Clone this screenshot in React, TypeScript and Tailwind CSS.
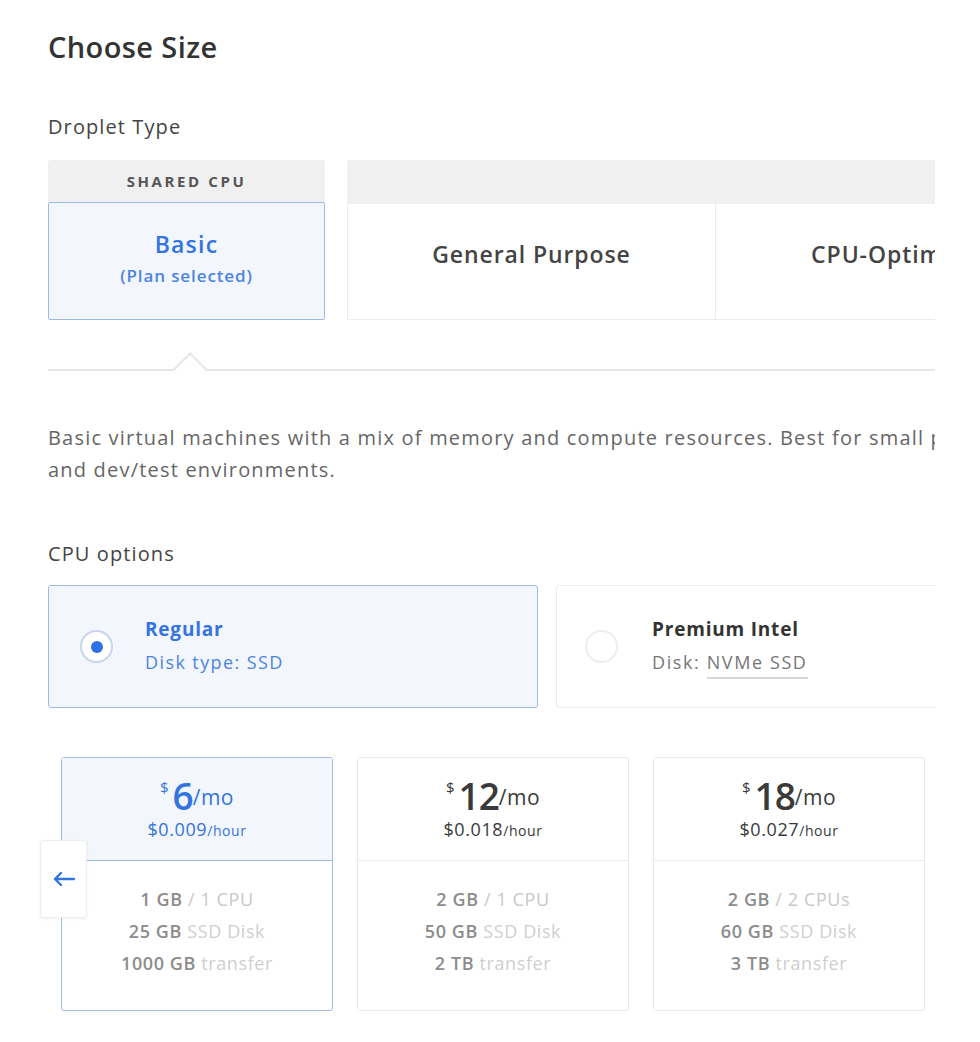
import React from 'react';

const plans = [
  { price: '6', hour: '$0.009', ram: '1 GB', cpu: '/ 1 CPU', disk: '25 GB', transfer: '1000 GB', selected: true },
  { price: '12', hour: '$0.018', ram: '2 GB', cpu: '/ 1 CPU', disk: '50 GB', transfer: '2 TB', selected: false },
  { price: '18', hour: '$0.027', ram: '2 GB', cpu: '/ 2 CPUs', disk: '60 GB', transfer: '3 TB', selected: false },
];

function PlanCard({ plan }: { plan: (typeof plans)[number] }) {
  const sel = plan.selected;
  return (
    <div
      className={`w-[272px] h-[254px] shrink-0 rounded-[3px] border flex flex-col ${
        sel ? 'border-[#9dbbe8]' : 'border-[#e8e8e8]'
      }`}
    >
      <div
        className={`h-[103px] flex flex-col items-center justify-center border-b pb-[4px] ${
          sel ? 'bg-[#f3f7fd] border-[#9dbbe8] text-[#3374e0]' : 'border-[#ececec] text-[#3a3a3a]'
        }`}
      >
        <div className="flex items-start leading-none">
          <span className="text-[15px] mt-[3px] mr-[4px]">$</span>
          <span className="text-[37px] font-semibold tracking-[-1px]">{plan.price}</span>
          <span className="text-[21px] mt-[10px] tracking-[0.5px]">/mo</span>
        </div>
        <div className="mt-[6px] leading-none tracking-[0.6px]">
          <span className="text-[18px]">{plan.hour}</span>
          <span className="text-[14px]">/hour</span>
        </div>
      </div>
      <div className="flex-1 flex flex-col items-center pt-[22px] text-[18px] leading-[32px] tracking-[0.6px] text-[#8c8c8c]">
        <p>
          <span className="font-semibold">{plan.ram}</span> <span className="text-[#c8c8c8]">{plan.cpu}</span>
        </p>
        <p>
          <span className="font-semibold">{plan.disk}</span> <span className="text-[#cfcfcf]">SSD Disk</span>
        </p>
        <p>
          <span className="font-semibold">{plan.transfer}</span> <span className="text-[#cfcfcf]">transfer</span>
        </p>
      </div>
    </div>
  );
}

export default function App() {
  return (
    <div
      className="w-[980px] h-[1042px] bg-white overflow-hidden"
      style={{ fontFamily: '"Open Sans", "Liberation Sans", sans-serif' }}
    >
      <div className="w-[935px] overflow-hidden pl-[48px] pt-[28px]">
        <div className="w-[1100px]">
          <h1 className="text-[29px] leading-[38px] font-semibold tracking-[0.4px] text-[#333]">Choose Size</h1>

          <h2 className="mt-[48px] text-[20px] leading-[26px] tracking-[1.1px] text-[#444]">Droplet Type</h2>

          {/* Droplet type tabs */}
          <div className="mt-[20px] flex gap-[22px]">
            <div className="w-[277px] flex flex-col">
              <div className="h-[42px] bg-[#f0f0f0] rounded-t-[3px] flex items-center justify-center text-[15px] font-bold tracking-[2.6px] text-[#555]">
                SHARED CPU
              </div>
              <div className="h-[118px] bg-[#f3f7fd] border border-[#9dbbe8] rounded-[2px] flex flex-col items-center justify-center pb-[6px]">
                <span className="text-[23px] leading-[28px] font-semibold tracking-[1.2px] text-[#3374e0]">Basic</span>
                <span className="mt-[8px] text-[17px] leading-[20px] font-semibold tracking-[0.9px] text-[#4c84e3]">(Plan selected)</span>
              </div>
            </div>
            <div className="w-[740px] flex flex-col">
              <div className="h-[44px] bg-[#f0f0f0] rounded-t-[3px]" />
              <div className="h-[116px] flex border border-t-0 border-[#ececec]">
                <div className="w-[368px] flex items-center justify-center pb-[14px] border-r border-[#ececec] text-[23px] font-semibold tracking-[0.9px] text-[#444]">
                  General Purpose
                </div>
                <div className="flex-1 flex items-center justify-center pb-[14px] text-[23px] font-semibold tracking-[0.9px] text-[#444]">
                  CPU-Optimized
                </div>
              </div>
            </div>
          </div>

          {/* Divider with notch */}
          <div className="relative mt-[49px] h-[2px] bg-[#e6e6e6]">
            <div className="absolute left-[130px] top-[-12px] w-[24px] h-[24px] rotate-45 bg-white border-l-2 border-t-2 border-[#e6e6e6]" />
          </div>

          <p className="mt-[51px] whitespace-nowrap text-[20px] leading-[32px] tracking-[1.2px] text-[#666]">
            Basic virtual machines with a mix of memory and compute resources. Best for small projects that can handle
            variable levels of CPU performance, like blogs, web apps
            <br />
            and dev/test environments.
          </p>

          <h2 className="mt-[55px] text-[20px] leading-[26px] tracking-[1.1px] text-[#444]">CPU options</h2>

          {/* CPU options */}
          <div className="mt-[18px] flex gap-[18px]">
            <div className="w-[490px] h-[123px] bg-[#f3f7fd] border border-[#9dbbe8] rounded-[3px] flex items-center pl-[31px]">
              <div className="w-[33px] h-[33px] rounded-full border-2 border-[#c7d6ee] bg-white flex items-center justify-center">
                <div className="w-[12px] h-[12px] rounded-full bg-[#2f6fe6]" />
              </div>
              <div className="ml-[32px] flex flex-col mt-[-4px]">
                <span className="text-[19px] leading-[26px] font-bold tracking-[0.8px] text-[#3374e0]">Regular</span>
                <span className="mt-[8px] text-[18px] leading-[24px] tracking-[1.4px] text-[#4c84e3]">Disk type: SSD</span>
              </div>
            </div>
            <div className="w-[490px] h-[123px] bg-white border border-[#ececec] rounded-[3px] flex items-center pl-[28px]">
              <div className="w-[33px] h-[33px] rounded-full border-2 border-[#eeeeee] bg-white" />
              <div className="ml-[34px] flex flex-col mt-[-4px]">
                <span className="text-[19px] leading-[26px] font-bold tracking-[0.8px] text-[#333]">Premium Intel</span>
                <span className="mt-[8px] text-[18px] leading-[24px] tracking-[1.6px] text-[#777]">
                  Disk: <span className="border-b-2 border-[#d8d8d8] pb-[3px]">NVMe SSD</span>
                </span>
              </div>
            </div>
          </div>

          {/* Plans */}
          <div className="relative mt-[49px] pl-[13px] flex gap-[24px]">
            {plans.map((p) => (
              <PlanCard key={p.price} plan={p} />
            ))}
            <button className="absolute left-[-8px] top-[83px] w-[47px] h-[78px] bg-white border border-[#eeeeee] rounded-[3px] shadow-[0_1px_3px_rgba(0,0,0,0.06)] flex items-center justify-center text-[#3374e0]">
              <svg width="22" height="14" viewBox="0 0 22 14" fill="none" stroke="currentColor" strokeWidth="2.4" strokeLinecap="round" strokeLinejoin="round">
                <path d="M21 7H2M8 1L2 7l6 6" />
              </svg>
            </button>
          </div>
        </div>
      </div>
    </div>
  );
}
